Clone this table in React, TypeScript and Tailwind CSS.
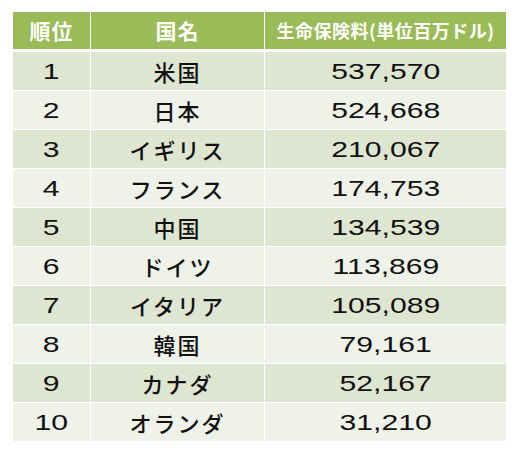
import React from "react";

const rows: [string, string, string][] = [
  ["1", "米国", "537,570"],
  ["2", "日本", "524,668"],
  ["3", "イギリス", "210,067"],
  ["4", "フランス", "174,753"],
  ["5", "中国", "134,539"],
  ["6", "ドイツ", "113,869"],
  ["7", "イタリア", "105,089"],
  ["8", "韓国", "79,161"],
  ["9", "カナダ", "52,167"],
  ["10", "オランダ", "31,210"],
];

const jp = { fontFamily: '"Noto Sans CJK JP", "Noto Sans", sans-serif' };
const num = { fontFamily: '"Liberation Sans", Arial, sans-serif' };

export default function App() {
  return (
    <div className="w-[518px] h-[452px] bg-white pt-[12px] pl-[13px]">
      <div className="w-[493px] flex flex-col gap-px">
        <div className="grid grid-cols-[77px_173px_241px] gap-x-px h-[37px] mb-[2px]">
          <div className="bg-[#9bbb59] flex items-center justify-center text-white font-bold text-[21px] tracking-[1px]" style={jp}>
            順位
          </div>
          <div className="bg-[#9bbb59] flex items-center justify-center text-white font-bold text-[21px] tracking-[1px]" style={jp}>
            国名
          </div>
          <div className="bg-[#9bbb59] flex items-center justify-center text-white font-bold text-[18px] tracking-[0.5px]" style={jp}>
            生命保険料(単位百万ドル)
          </div>
        </div>
        {rows.map((r, i) => {
          const bg = i % 2 === 0 ? "bg-[#dee6d2]" : "bg-[#eef2e8]";
          return (
            <div key={r[0]} className="grid grid-cols-[77px_173px_241px] gap-x-px h-[38px]">
              <div className={`${bg} flex items-center justify-center text-[#111] text-[22px]`} style={num}>
                <span className="inline-block scale-x-[1.37]">{r[0]}</span>
              </div>
              <div className={`${bg} flex items-center justify-center text-[#111] text-[22px] font-medium tracking-[2px]`} style={jp}>
                {r[1]}
              </div>
              <div className={`${bg} flex items-center justify-center text-[#111] text-[22px]`} style={num}>
                <span className="inline-block scale-x-[1.37]">{r[2]}</span>
              </div>
            </div>
          );
        })}
      </div>
    </div>
  );
}
